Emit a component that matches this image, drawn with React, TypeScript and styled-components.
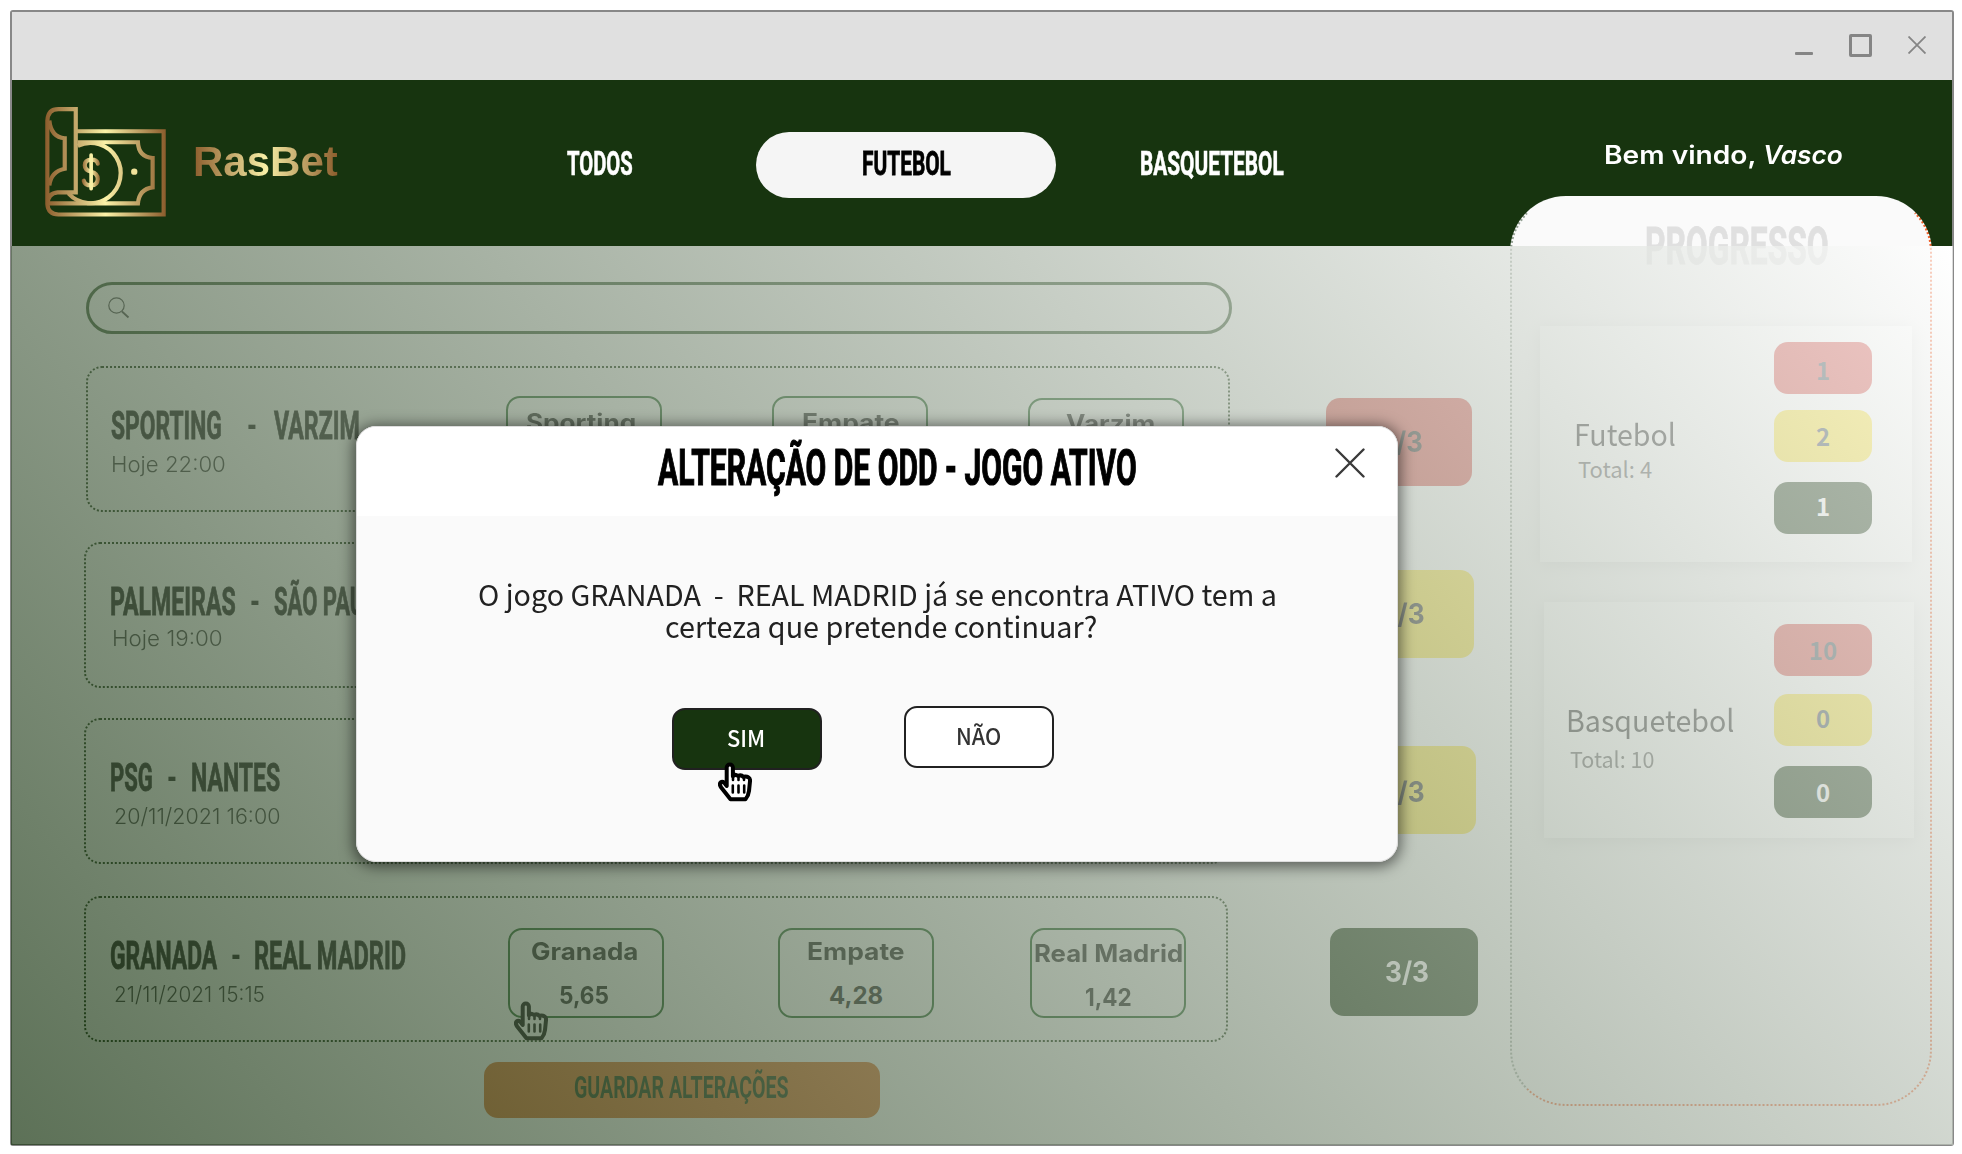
import React, { useLayoutEffect, useRef, useState } from "react";
import styled, { createGlobalStyle } from "styled-components";

const GREEN = "#17340f";
const INK = "#212121";
const DISPLAY = `Roboto, "Liberation Sans", sans-serif`;
const ROUND = `Inter, "Liberation Sans", sans-serif`;
const HUMAN = `"Noto Sans CJK JP", "Noto Sans", sans-serif`;

const GlobalStyle = createGlobalStyle`
  * { box-sizing: border-box; }
  body { margin: 0; background: #fff; font-family: ${HUMAN}; color: ${INK}; }
  h1, h2, p { margin: 0; font-weight: inherit; font-size: inherit; }
`;

/* Text squeezed or stretched horizontally to an exact width */
const FitBox = styled.span<{ $w: number; $size: number; $weight?: number; $font?: string; $color?: string; $italic?: boolean; $stroke?: number }>`
  display: block;
  flex: none;
  width: ${(p) => p.$w}px;
  height: ${(p) => p.$size}px;
  line-height: ${(p) => p.$size}px;
  font-size: ${(p) => p.$size}px;
  font-weight: ${(p) => p.$weight ?? 400};
  font-family: ${(p) => p.$font ?? DISPLAY};
  font-style: ${(p) => (p.$italic ? "italic" : "normal")};
  color: ${(p) => p.$color ?? "inherit"};
  -webkit-text-stroke: ${(p) => p.$stroke ?? 0}px currentColor;
`;
const FitInner = styled.span`
  display: inline-block;
  white-space: pre;
  transform-origin: 0 50%;
`;

type FitProps = { w: number; size: number; weight?: number; font?: string; color?: string; italic?: boolean; stroke?: number; children: string };

function Fit({ w, size, weight, font, color, italic, stroke, children }: FitProps) {
  const ref = useRef<HTMLSpanElement>(null);
  const [scale, setScale] = useState(1);
  useLayoutEffect(() => {
    if (ref.current) setScale(w / ref.current.offsetWidth);
  }, [w, children]);
  return (
    <FitBox $w={w} $size={size} $weight={weight} $font={font} $color={color} $italic={italic} $stroke={stroke}>
      <FitInner ref={ref} style={{ transform: `scaleX(${scale})` }}>{children}</FitInner>
    </FitBox>
  );
}

const Window = styled.div`
  position: relative;
  margin: 10px;
  width: 1944px;
  height: 1136px;
  border: 2px solid #888;
  border-radius: 3px;
`;
const TitleBar = styled.div`
  height: 68px;
  background: #e0e0e0;
  display: flex;
  justify-content: flex-end;
  align-items: center;
  gap: 36px;
  padding: 0 26px 2px 0;
`;
const Minimize = styled.i`
  width: 18px;
  height: 3px;
  margin-top: 16px;
  border-radius: 1px;
  background: #858585;
`;
const Maximize = styled.i`
  width: 23px;
  height: 23px;
  border: 3px solid #858585;
  border-radius: 2px;
`;

const Header = styled.header`
  height: 166px;
  background: ${GREEN};
  display: flex;
  align-items: flex-start;
  padding-left: 33px;
`;
const LogoMark = styled.svg`
  flex: none;
  margin-top: 27px;
`;
const Brand = styled.div`
  flex: none;
  width: 145px;
  margin: 60px 112px 0 27px;
  font: bold 42px/44px "Liberation Sans", Arial, sans-serif;
  color: transparent;
  background: linear-gradient(90deg, #8b5c2c, #f8efa6 50%, #8b5c2c);
  background-clip: text;
  -webkit-background-clip: text;
`;
const Nav = styled.nav`
  display: flex;
  gap: 6px;
  margin-top: 52px;
`;
const NavItem = styled.div<{ $active?: boolean }>`
  width: 300px;
  height: 66px;
  padding-bottom: 5px;
  border-radius: 33px;
  display: flex;
  align-items: center;
  justify-content: center;
  background: ${(p) => (p.$active ? "#f5f5f5" : "transparent")};
  color: ${(p) => (p.$active ? "#000" : "#fff")};
`;
const Welcome = styled.div`
  display: flex;
  gap: 7px;
  margin: 63px 0 0 242px;
  color: #fff;
`;

const Main = styled.main`
  position: relative;
  height: 898px;
  display: flex;
  align-items: flex-start;
`;
const Veil = styled.div`
  position: absolute;
  inset: 0 -1px -1px -1px;
  opacity: 0.7;
  background: linear-gradient(49deg, ${GREEN}, #fff);
`;
const Games = styled.section`
  flex: none;
  width: 1498px;
  padding: 36px 0 0 72px;
`;
const Search = styled.div`
  width: 1146px;
  height: 52px;
  margin: 0 0 32px 2px;
  padding-left: 19px;
  display: flex;
  align-items: center;
  border: 3px solid #2f5129;
  border-radius: 26px;
`;
const GameLine = styled.div<{ $shift: number; $gap: number }>`
  display: flex;
  align-items: flex-start;
  margin: 0 0 ${(p) => p.$gap}px ${(p) => p.$shift}px;
`;
const GameCard = styled.div`
  flex: none;
  width: 1144px;
  height: 146px;
  display: flex;
  border: 2px dotted ${GREEN};
  border-radius: 16px;
`;
const GameInfo = styled.div<{ $w: number; $pad: number }>`
  flex: none;
  width: ${(p) => p.$w}px;
  padding: 39px 0 0 ${(p) => p.$pad}px;
`;
const Teams = styled.div`
  display: flex;
`;
const Dash = styled.div<{ $before: number; $after: number }>`
  padding: 0 ${(p) => p.$after}px 0 ${(p) => p.$before}px;
`;
const GameDate = styled.div<{ $left: number; $top: number }>`
  padding: ${(p) => p.$top}px 0 0 ${(p) => p.$left}px;
`;
const Odd = styled.div<{ $top: number; $after: number; $drop: number; $nudge: number }>`
  flex: none;
  width: 156px;
  height: 90px;
  margin: ${(p) => p.$top}px ${(p) => p.$after}px 0 0;
  padding-top: ${(p) => 10 + p.$drop}px;
  padding-left: ${(p) => Math.max(0, p.$nudge * 2)}px;
  padding-right: ${(p) => Math.max(0, p.$nudge * -2)}px;
  display: flex;
  flex-direction: column;
  align-items: center;
  gap: 20px;
  border: 2px solid #1b5e20;
  border-radius: 14px;
`;
const Status = styled.div<{ $bg: string; $w: number; $top: number; $left: number; $pad: number; $drop: number }>`
  flex: none;
  width: ${(p) => p.$w}px;
  height: 88px;
  margin: ${(p) => p.$top}px 0 0 ${(p) => p.$left}px;
  padding: ${(p) => p.$drop}px 0 0 ${(p) => p.$pad}px;
  display: flex;
  align-items: center;
  justify-content: center;
  border-radius: 14px;
  background: ${(p) => p.$bg};
`;
const Save = styled.div`
  width: 396px;
  height: 56px;
  margin-left: 400px;
  padding: 0 2px 6px 0;
  display: flex;
  align-items: center;
  justify-content: center;
  border-radius: 14px;
  background: #dc7228;
`;

const Progress = styled.aside`
  flex: none;
  width: 422px;
  height: 910px;
  margin-top: -50px;
  padding-top: 23px;
  border: 2px dotted #f0602a;
  border-left-color: #93a093;
  border-top-color: #fafafa;
  border-radius: 56px;
  background: #fafafa;
`;
const ProgressTitle = styled.h2`
  display: flex;
  justify-content: center;
  margin: 0 0 53px 31px;
`;
const SportCard = styled.div<{ $left: number; $w: number }>`
  width: ${(p) => p.$w}px;
  height: 236px;
  margin: 0 0 40px ${(p) => p.$left}px;
  display: flex;
  background: #fff;
  box-shadow: 0 3px 16px rgba(0, 0, 0, 0.1);
`;
const SportText = styled.div<{ $w: number; $top: number; $left: number; $gap: number }>`
  flex: none;
  width: ${(p) => p.$w}px;
  padding: ${(p) => p.$top}px 0 0 ${(p) => p.$left}px;
  display: flex;
  flex-direction: column;
  gap: ${(p) => p.$gap}px;
`;
const SportTotal = styled.div`
  padding-left: 4px;
`;
const Counts = styled.div<{ $top: number }>`
  padding-top: ${(p) => p.$top}px;
`;
const Count = styled.div<{ $bg: string; $color?: string; $after: number; $up: number }>`
  width: 98px;
  height: 52px;
  margin-bottom: ${(p) => p.$after}px;
  border-radius: 14px;
  background: ${(p) => p.$bg};
  color: ${(p) => p.$color ?? "#37474f"};
  font: bold 24px/${(p) => 50 + p.$up}px ${HUMAN};
  text-align: center;
`;

const Modal = styled.div`
  position: absolute;
  left: 344px;
  top: 414px;
  width: 1042px;
  height: 436px;
  overflow: hidden;
  border: 1px solid #ddd;
  border-radius: 20px;
  background: #fafafa;
`;
const ModalShadow = styled(Modal)`
  overflow: visible;
  box-shadow: 0 2px 14px 3px rgba(0, 0, 0, 0.5);
`;
const ModalHead = styled.div`
  height: 89px;
  padding: 16px 32px 0 301px;
  display: flex;
  justify-content: space-between;
  align-items: flex-start;
  background: #fff;
  color: #000;
`;
const CloseIcon = styled.svg`
  margin-top: 5px;
`;
const Question = styled.div`
  padding-top: 63px;
  display: flex;
  flex-direction: column;
  align-items: center;
  gap: 3px;
`;
const QuestionEnd = styled.div`
  padding-left: 7px;
`;
const Actions = styled.div`
  display: flex;
  align-items: flex-start;
  gap: 82px;
  padding: 66px 0 0 315px;
`;
const ActionButton = styled.div<{ $primary?: boolean }>`
  width: 150px;
  height: 62px;
  margin-top: ${(p) => (p.$primary ? 2 : 0)}px;
  padding: 0 2px 3px 0;
  display: flex;
  align-items: center;
  justify-content: center;
  border: 2px solid #212121;
  border-radius: 13px;
  background: ${(p) => (p.$primary ? GREEN : "#fff")};
  color: ${(p) => (p.$primary ? "#fff" : "#333")};
`;
const Pointer = styled.svg<{ $x: number; $y: number }>`
  position: absolute;
  left: ${(p) => p.$x}px;
  top: ${(p) => p.$y}px;
`;

function Hand({ x, y }: { x: number; y: number }) {
  return (
    <Pointer $x={x} $y={y} width="34" height="40" viewBox="0 0 34 40" fill="none" stroke="#000" strokeLinejoin="round" strokeLinecap="round">
      <path
        d="M8.700 24V5.500a3 3 0 0 1 6.200 0V14.200q2-2.500 5.200-.2q3-1.600 5.200.8q3-.8 5 .4q2 1 1.700 4L31 29q-.6 5-3.500 8.300H12.500L3.200 25.500Q.8 22 2.800 20.300Q5.400 18.700 8.700 24Z"
        fill="#fff"
        strokeWidth="4"
      />
      <path d="M15 14v4M20.500 14.500v3.500M26 15v3" strokeWidth="2.600" />
      <path d="M14.800 23.500v7M20.500 23.500v7M26.200 23.500v7" strokeWidth="2.600" />
    </Pointer>
  );
}

function Logo() {
  return (
    <LogoMark width="121" height="110" viewBox="0 0 362 328" fill="none" stroke="url(#gold)" strokeWidth="12.500">
      <defs>
        <linearGradient id="gold" gradientUnits="userSpaceOnUse" x1="0" y1="0" x2="362" y2="0">
          <stop offset="0" stopColor="#8b5c2c" />
          <stop offset=".5" stopColor="#fcf3a8" />
          <stop offset="1" stopColor="#8b5c2c" />
        </linearGradient>
        <linearGradient id="coin" gradientUnits="userSpaceOnUse" x1="110" y1="0" x2="166" y2="0">
          <stop offset="0" stopColor="#8b5c2c" />
          <stop offset=".5" stopColor="#fcf3a8" />
          <stop offset="1" stopColor="#8b5c2c" />
        </linearGradient>
      </defs>
      <path d="M7 290V40Q9 6 40 6H92V255H38Q9 257 7 290Q9 320 40 321H355V72H98" />
      <path d="M98 105H278Q280 148 322 152V240Q282 245 278 288H8" />
      <path d="M98 116A90 90 0 1 1 70 258" />
      <path d="M13 40Q18 90 59 93V184Q18 192 13 234" />
      <path
        d="M158 169Q156 157 138 157Q119 158 119 174Q119 189 138 193Q158 198 158 215Q157 233 138 234Q119 234 116 220"
        stroke="url(#coin)"
        strokeLinecap="round"
      />
      <rect x="132.500" y="138" width="11" height="111" rx="5" fill="#f8efa6" stroke="none" />
      <circle cx="267" cy="193" r="9.500" fill="#f0e29a" stroke="none" />
    </LogoMark>
  );
}

const RED = "#d8504a";
const YELLOW = "#fbe338";

type Label = [string, number];
type Game = {
  shift: number; gap: number; info: number; pad: number; dash: [number, number];
  home: Label; away: Label; date: Label; dateLeft: number; dateTop: number;
  odds: { name: Label; value?: Label; top: number; after: number; drop: number; nudge: number }[];
  status: { text: string; bg: string; color: string; w: number; top: number; left: number; pad: number; drop: number };
};

const games: Game[] = [
  {
    shift: 2, gap: 30, info: 418, pad: 23, dash: [25, 17], home: ["SPORTING", 111], away: ["VARZIM", 86],
    date: ["Hoje 22:00", 115], dateLeft: 0, dateTop: 8,
    odds: [
      { name: ["Sporting", 110], top: 28, after: 110, drop: 3, nudge: -3 },
      { name: ["Empate", 98], top: 28, after: 100, drop: 3, nudge: 1 },
      { name: ["Varzim", 89], top: 30, after: 0, drop: 2, nudge: 4 },
    ],
    status: { text: "0/3", bg: RED, color: INK, w: 146, top: 32, left: 96, pad: 3, drop: 0 },
  },
  {
    shift: 0, gap: 30, info: 422, pad: 24, dash: [14, 14], home: ["PALMEIRAS", 126], away: ["SÃO PAULO", 117],
    date: ["Hoje 19:00", 111], dateLeft: 2, dateTop: 6, odds: [],
    status: { text: "2/3", bg: YELLOW, color: INK, w: 146, top: 28, left: 100, pad: 3, drop: 0 },
  },
  {
    shift: 0, gap: 32, info: 422, pad: 24, dash: [14, 14], home: ["PSG", 43], away: ["NANTES", 89],
    date: ["20/11/2021 16:00", 166], dateLeft: 4, dateTop: 8, odds: [],
    status: { text: "2/3", bg: YELLOW, color: INK, w: 146, top: 28, left: 102, pad: 0, drop: 4 },
  },
  {
    shift: 0, gap: 20, info: 422, pad: 24, dash: [14, 13], home: ["GRANADA", 107], away: ["REAL MADRID", 152],
    date: ["21/11/2021 15:15", 151], dateLeft: 4, dateTop: 8,
    odds: [
      { name: ["Granada", 107], value: ["5,65", 50], top: 30, after: 114, drop: 0, nudge: -2 },
      { name: ["Empate", 98], value: ["4,28", 54], top: 30, after: 96, drop: 0, nudge: 0 },
      { name: ["Real Madrid", 149], value: ["1,42", 47], top: 30, after: 0, drop: 2, nudge: 0.5 },
    ],
    status: { text: "3/3", bg: GREEN, color: "#fff", w: 148, top: 32, left: 102, pad: 5, drop: 0 },
  },
];

export default function App() {
  return (
    <>
      <GlobalStyle />
      <Window>
        <TitleBar>
          <Minimize />
          <Maximize />
          <svg width="18" height="18" viewBox="0 0 18 18" stroke="#858585" strokeWidth="1.800">
            <path d="M.5.5l17 17M17.500.5l-17 17" />
          </svg>
        </TitleBar>
        <Header>
          <Logo />
          <Brand>RasBet</Brand>
          <Nav>
            <NavItem><Fit w={66} size={34} weight={700} stroke={0.6}>TODOS</Fit></NavItem>
            <NavItem $active><Fit w={89} size={34} weight={700} stroke={0.8}>FUTEBOL</Fit></NavItem>
            <NavItem><Fit w={144} size={34} weight={700} stroke={0.6}>BASQUETEBOL</Fit></NavItem>
          </Nav>
          <Welcome>
            <Fit w={152} size={25} weight={600} font={ROUND}>Bem vindo,</Fit>
            <Fit w={80} size={25} weight={600} font={ROUND} italic>Vasco</Fit>
          </Welcome>
        </Header>
        <Main>
          <Games>
            <Search>
              <svg width="22" height="22" viewBox="0 0 22 22" fill="none" stroke="#444" strokeWidth="1.200">
                <circle cx="8.500" cy="8.500" r="7.700" />
                <path d="M14 14.500l6.500 6" strokeWidth="1.800" />
              </svg>
            </Search>
            {games.map((g) => (
              <GameLine key={g.home[0]} $shift={g.shift} $gap={g.gap}>
                <GameCard>
                  <GameInfo $w={g.info} $pad={g.pad}>
                    <Teams>
                      <Fit w={g.home[1]} size={38} weight={700} stroke={0.8}>{g.home[0]}</Fit>
                      <Dash $before={g.dash[0]} $after={g.dash[1]}>
                        <Fit w={10} size={38} weight={700}>-</Fit>
                      </Dash>
                      <Fit w={g.away[1]} size={38} weight={700} stroke={0.8}>{g.away[0]}</Fit>
                    </Teams>
                    <GameDate $left={g.dateLeft} $top={g.dateTop}>
                      <Fit w={g.date[1]} size={22} weight={300} font={ROUND} color="#3d3d3d">{g.date[0]}</Fit>
                    </GameDate>
                  </GameInfo>
                  {g.odds.map((o) => (
                    <Odd key={o.name[0]} $top={o.top} $after={o.after} $drop={o.drop} $nudge={o.nudge}>
                      <Fit w={o.name[1]} size={24} weight={700} font={ROUND}>{o.name[0]}</Fit>
                      {o.value && <Fit w={o.value[1]} size={24} weight={700} font={ROUND}>{o.value[0]}</Fit>}
                    </Odd>
                  ))}
                </GameCard>
                <Status $bg={g.status.bg} $w={g.status.w} $top={g.status.top} $left={g.status.left} $pad={g.status.pad} $drop={g.status.drop}>
                  <Fit w={44} size={28} weight={700} font={ROUND} color={g.status.color}>{g.status.text}</Fit>
                </Status>
              </GameLine>
            ))}
            <Save><Fit w={215} size={32} weight={700} color={GREEN}>GUARDAR ALTERAÇÕES</Fit></Save>
          </Games>
          <Progress>
            <ProgressTitle><Fit w={184} size={52} weight={700} color="#e0e0e0" stroke={0.8}>PROGRESSO</Fit></ProgressTitle>
            <SportCard $left={28} $w={372}>
              <SportText $w={234} $top={92} $left={34} $gap={9}>
                <Fit w={102} size={30} font={HUMAN}>Futebol</Fit>
                <SportTotal><Fit w={74} size={22} font={HUMAN} color="#555">Total: 4</Fit></SportTotal>
              </SportText>
              <Counts $top={16}>
                <Count $bg={RED} $after={16} $up={5}>1</Count>
                <Count $bg={YELLOW} $after={20} $up={1}>2</Count>
                <Count $bg={GREEN} $color="#fff" $after={0} $up={-3}>1</Count>
              </Counts>
            </SportCard>
            <SportCard $left={32} $w={370}>
              <SportText $w={230} $top={102} $left={22} $gap={13}>
                <Fit w={168} size={30} font={HUMAN}>Basquetebol</Fit>
                <SportTotal><Fit w={84} size={22} font={HUMAN} color="#555">Total: 10</Fit></SportTotal>
              </SportText>
              <Counts $top={22}>
                <Count $bg={RED} $after={18} $up={1}>10</Count>
                <Count $bg={YELLOW} $after={20} $up={-2}>0</Count>
                <Count $bg={GREEN} $color="#fff" $after={0} $up={1}>0</Count>
              </Counts>
            </SportCard>
          </Progress>
          <Hand x={502} y={755} />
          <Veil />
        </Main>
        <ModalShadow />
        <Modal role="dialog">
          <ModalHead>
            <Fit w={479} size={50} weight={700} stroke={1.2}>ALTERAÇÃO DE ODD - JOGO ATIVO</Fit>
            <CloseIcon width="30" height="30" viewBox="0 0 30 30" stroke="#3a3a3a" strokeWidth="2.400" strokeLinecap="round">
              <path d="M1.500 1.500l27 27M28.500 1.500l-27 27" />
            </CloseIcon>
          </ModalHead>
          <Question>
            <Fit w={799} size={29} font={HUMAN}>{"O jogo GRANADA  -  REAL MADRID já se encontra ATIVO tem a"}</Fit>
            <QuestionEnd><Fit w={432} size={29} font={HUMAN}>certeza que pretende continuar?</Fit></QuestionEnd>
          </Question>
          <Actions>
            <ActionButton $primary><Fit w={38} size={23} weight={500} font={HUMAN}>SIM</Fit></ActionButton>
            <ActionButton><Fit w={45} size={23} weight={500} font={HUMAN}>NÃO</Fit></ActionButton>
          </Actions>
        </Modal>
        <Hand x={706} y={750} />
      </Window>
    </>
  );
}
